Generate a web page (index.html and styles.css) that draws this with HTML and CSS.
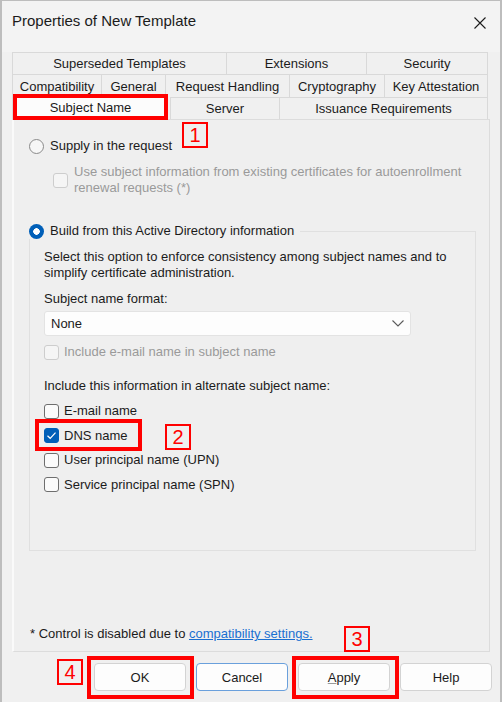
FILE: index.html
```html
<!DOCTYPE html>
<html lang="en">
<head>
  <meta charset="UTF-8">
  <title>Properties of New Template</title>
  <link rel="stylesheet" href="styles.css">
</head>
<body>
  <div class="window">
    <header class="titlebar">
      <span class="title">Properties of New Template</span>
      <svg class="close" width="12" height="12" viewBox="0 0 12 12">
        <path d="M0.5 0.5 L11.5 11.5 M11.5 0.5 L0.5 11.5" stroke="#1b1b1b" stroke-width="1.1" fill="none"/>
      </svg>
    </header>

    <div class="tabs">
      <div class="tab-row row1">
        <div class="tab">Superseded Templates</div>
        <div class="tab">Extensions</div>
        <div class="tab">Security</div>
      </div>
      <div class="tab-row row2">
        <div class="tab">Compatibility</div>
        <div class="tab">General</div>
        <div class="tab">Request Handling</div>
        <div class="tab">Cryptography</div>
        <div class="tab">Key Attestation</div>
      </div>
      <div class="tab-row row3">
        <div class="tab active">Subject Name</div>
        <div class="tab">Server</div>
        <div class="tab">Issuance Requirements</div>
      </div>
    </div>

    <section class="panel">
      <div class="option first">
        <span class="radio"></span>
        <span>Supply in the request</span>
      </div>
      <div class="sub-option disabled">
        <span class="check"></span>
        <span>Use subject information from existing certificates for autoenrollment<br>renewal requests (*)</span>
      </div>

      <fieldset class="group">
        <legend class="option">
          <span class="radio on"></span>
          <span>Build from this Active Directory information</span>
        </legend>
        <div class="group-body">
          <p class="desc">Select this option to enforce consistency among subject names and to<br>simplify certificate administration.</p>
          <p class="label">Subject name format:</p>
          <div class="select">
            <span>None</span>
            <svg width="12" height="7" viewBox="0 0 12 7">
              <path d="M0.5 0.5 L6 6 L11.5 0.5" stroke="#5a5a5a" stroke-width="1.1" fill="none"/>
            </svg>
          </div>
          <div class="row disabled">
            <span class="check"></span>
            <span>Include e-mail name in subject name</span>
          </div>
          <p class="label alt">Include this information in alternate subject name:</p>
          <div class="check-list">
            <div class="row"><span class="check"></span><span>E-mail name</span></div>
            <div class="row">
              <span class="check on">
                <svg width="11" height="9" viewBox="0 0 11 9"><path d="M1.5 4.8 L4.2 7.3 L9.5 1.6" stroke="#fff" stroke-width="1.2" fill="none"/></svg>
              </span>
              <span>DNS name</span>
            </div>
            <div class="row"><span class="check"></span><span>User principal name (UPN)</span></div>
            <div class="row"><span class="check"></span><span>Service principal name (SPN)</span></div>
          </div>
        </div>
      </fieldset>

      <p class="footnote">* Control is disabled due to <a href="#">compatibility settings.</a></p>
    </section>

    <footer class="buttons">
      <button class="btn">OK</button>
      <button class="btn focused">Cancel</button>
      <button class="btn"><u>A</u>pply</button>
      <button class="btn">Help</button>
    </footer>

    <!-- annotations -->
    <div class="mark mark-tab"></div>
    <div class="mark mark-dns"></div>
    <div class="mark mark-ok"></div>
    <div class="mark mark-apply"></div>
    <div class="num num1">1</div>
    <div class="num num2">2</div>
    <div class="num num3">3</div>
    <div class="num num4">4</div>
  </div>
</body>
</html>
```

FILE: styles.css
```css
* {
  box-sizing: border-box;
}

body {
  margin: 0;
  font-family: "Liberation Sans", Arial, sans-serif;
  font-size: 13px;
  color: #1b1b1b;
  background: #ffffff;
}

.window {
  position: relative;
  width: 502px;
  height: 702px;
  background: #f0f0f0;
  border: 1px solid #bdbdbd;
  border-width: 1px 2px 0 2px;
  overflow: hidden;
}

.titlebar {
  height: 51px;
  display: flex;
  justify-content: space-between;
  align-items: flex-start;
  padding: 11px 14px 0 10px;
  background: #f3f3f3;
}

.title {
  font-size: 15px;
  line-height: 18px;
}

.close {
  margin-top: 5px;
}

/* tabs */
.tabs {
  margin-left: 10px;
  width: 476px;
}

.tab-row {
  display: grid;
}

.row1 {
  grid-template-columns: 214px 140px 122px;
  height: 22px;
}

.row2 {
  grid-template-columns: 89px 64px 124px 95px 104px;
  height: 23px;
}

.row3 {
  grid-template-columns: 158px 109px 209px;
  height: 22px;
}

.tab {
  display: flex;
  align-items: center;
  justify-content: center;
  border-top: 1px solid #d9d9d9;
  border-left: 1px solid #d9d9d9;
  white-space: nowrap;
}

.tab:last-child {
  border-right: 1px solid #d9d9d9;
}

.tab.active {
  background: #fcfcfc;
  margin: -3px 2px -1px 0;
  position: relative;
  z-index: 1;
}

/* panel */
.panel {
  display: flex;
  flex-direction: column;
  margin-left: 10px;
  width: 478px;
  height: 533px;
  border: 1px solid #dcdcdc;
  border-left: 2px solid #fafafa;
  padding: 0 14px 9px 15px;
  background: #efefef;
}

.option {
  display: flex;
  align-items: center;
  gap: 6px;
  height: 16px;
  line-height: 16px;
}

.option.first {
  margin-top: 18px;
}

.radio {
  width: 15px;
  height: 15px;
  border-radius: 50%;
  border: 1px solid #8a8a8a;
  background: #f7f7f7;
  flex: none;
}

.radio.on {
  border: none;
  background: radial-gradient(circle, #ffffff 0 3px, #005fb8 3.5px);
}

.check {
  width: 15px;
  height: 15px;
  border-radius: 3px;
  border: 1px solid #6e6e6e;
  background: #fbfbfb;
  flex: none;
  display: flex;
  align-items: center;
  justify-content: center;
}

.check.on {
  background: #005fb8;
  border-color: #005fb8;
}

.disabled {
  color: #9a9a9a;
}

.disabled .check {
  border-color: #cdcdcd;
  background: #f5f5f5;
}

.sub-option {
  display: flex;
  align-items: center;
  gap: 6px;
  margin: 10px 0 0 24px;
  line-height: 16px;
}

.group {
  margin: 27px 0 0 0;
  padding: 0;
  width: 447px;
  height: 328px;
  border: 1px solid #e0e0e0;
}

.group legend {
  padding: 0 6px 0 0;
  margin-left: -1px;
}

.group-body {
  padding-left: 14px;
}

.desc,
.label {
  margin: 0;
  line-height: 16px;
}

.desc {
  margin-top: 10px;
}

.label {
  margin-top: 10px;
}

.label.alt {
  margin-top: 18px;
}

.select {
  margin-top: 4px;
  width: 367px;
  height: 25px;
  background: #fdfdfd;
  border: 1px solid #e3e3e3;
  border-radius: 3px;
  display: flex;
  align-items: center;
  justify-content: space-between;
  padding: 0 6px 0 6px;
  font-size: 13px;
}

.row {
  display: flex;
  align-items: center;
  gap: 5px;
  height: 16px;
  line-height: 16px;
}

.select + .row {
  margin-top: 8px;
}

.check-list {
  margin-top: 5px;
}

.check-list .row {
  height: 24.5px;
}

.footnote {
  margin: auto 0 0 0;
  line-height: 16px;
  padding-left: 1px;
}

.footnote a {
  color: #1a6fd1;
}

/* buttons */
.buttons {
  display: flex;
  justify-content: flex-end;
  gap: 10px;
  margin-top: 11px;
  padding-right: 8px;
}

.btn {
  width: 92px;
  height: 28px;
  font-family: "Liberation Sans", Arial, sans-serif;
  font-size: 13px;
  color: #1b1b1b;
  background: #fdfdfd;
  border: 1px solid #d3d3d3;
  border-radius: 4px;
}

.btn.focused {
  border-color: #6aa0dc;
}

.btn u {
  text-decoration-color: #9a9a9a;
}

/* red annotations */
.mark {
  position: absolute;
  border: 4px solid #ff0000;
  z-index: 5;
}

.mark-tab { left: 11px; top: 93px; width: 155px; height: 26px; }
.mark-dns { left: 33px; top: 418px; width: 107px; height: 32px; }
.mark-ok { left: 85px; top: 655px; width: 107px; height: 43px; }
.mark-apply { left: 290px; top: 655px; width: 107px; height: 43px; }

.num {
  position: absolute;
  width: 26px;
  height: 26px;
  border: 2px solid #ff0000;
  color: #ff0000;
  font-size: 20px;
  line-height: 22px;
  text-align: center;
  z-index: 5;
}

.num1 { left: 180px; top: 121px; }
.num2 { left: 163px; top: 423px; }
.num3 { left: 342px; top: 625px; }
.num4 { left: 55px; top: 658px; }
```
